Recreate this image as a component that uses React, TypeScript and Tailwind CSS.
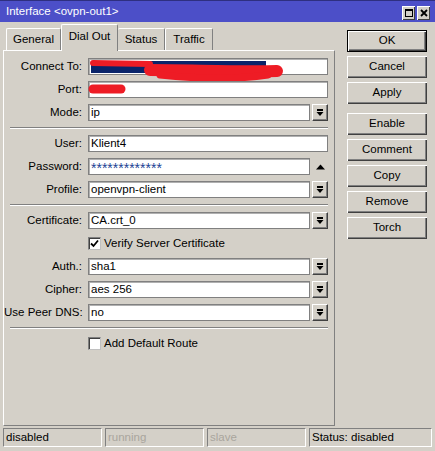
import React from 'react';

const font = { fontFamily: '"Liberation Sans", Arial, sans-serif' };

const DropArrow: React.FC = () => (
  <div className="w-[16px] h-[17px] ml-[2px] bg-[#d4d0c8] border-t border-l border-t-white border-l-white border-r border-b border-r-[#404040] border-b-[#404040] shadow-[inset_-1px_-1px_0_#808080] flex items-center justify-center">
    <svg width="8" height="8" viewBox="0 0 8 8">
      <rect x="1" y="0" width="6" height="2" fill="#000" />
      <polygon points="0.5,3 7.5,3 4,7" fill="#000" />
    </svg>
  </div>
);

const Field: React.FC<{ value?: React.ReactNode; drop?: boolean; up?: boolean }> = ({ value, drop, up }) => (
  <div className="flex items-center">
    <div
      className={`h-[17px] ${drop || up ? 'w-[222px]' : 'w-[240px]'} bg-white border border-[#808080] shadow-[inset_1px_1px_0_#b0b0b0] flex items-center pl-[2px] text-[11.5px] text-black overflow-hidden whitespace-nowrap`}
    >
      {value}
    </div>
    {drop && <DropArrow />}
    {up && (
      <div className="w-[16px] h-[17px] ml-[2px] flex items-center justify-center">
        <svg width="9" height="6" viewBox="0 0 9 6">
          <polygon points="0,5.5 9,5.5 4.5,0.5" fill="#000" />
        </svg>
      </div>
    )}
  </div>
);

const Row: React.FC<{ label?: string; children: React.ReactNode }> = ({ label, children }) => (
  <div className="flex items-center h-[23px]">
    <div className="w-[78px] text-right text-[11.5px] text-black whitespace-nowrap">{label}</div>
    <div className="ml-[6px] relative">{children}</div>
  </div>
);

const Separator: React.FC = () => (
  <div className="h-[8px] flex items-center pl-[6px] pr-[6px]">
    <div className="w-full border-t border-t-[#808080] border-b border-b-white" />
  </div>
);

const Check: React.FC<{ checked?: boolean; label: string }> = ({ checked, label }) => (
  <div className="flex items-center">
    <div className="w-[13px] h-[13px] bg-white border border-t-[#808080] border-l-[#808080] border-r-[#c0c0c0] border-b-[#c0c0c0] shadow-[inset_1px_1px_0_#404040] flex items-center justify-center">
      {checked && (
        <svg width="9" height="9" viewBox="0 0 9 9">
          <path d="M1 4.5 L3.5 7 L8 1.5" stroke="#000" strokeWidth="1.8" fill="none" />
        </svg>
      )}
    </div>
    <span className="ml-[3px] text-[11.5px] text-black">{label}</span>
  </div>
);

const Button: React.FC<{ label: string; primary?: boolean }> = ({ label, primary }) => (
  <div
    className={`h-[22px] w-[80px] flex items-center justify-center text-[11.5px] text-black bg-[#d4d0c8] shadow-[inset_1px_1px_0_#fff,inset_-1px_-1px_0_#404040,inset_-2px_-2px_0_#808080] ${
      primary ? 'border border-black' : ''
    }`}
  >
    {label}
  </div>
);

const TitleButton: React.FC<{ children: React.ReactNode }> = ({ children }) => (
  <div className="w-[13px] h-[14px] bg-[#d4d0c8] shadow-[inset_1px_1px_0_#fff,inset_-1px_-1px_0_#404040] flex items-center justify-center">
    {children}
  </div>
);

const StatusCell: React.FC<{ text: string; dim?: boolean; wide?: boolean }> = ({ text, dim, wide }) => (
  <div
    className={`h-[19px] ${wide ? 'w-[123px]' : 'w-[99px]'} border border-t-[#808080] border-l-[#808080] border-r-white border-b-white flex items-center pl-[2px] text-[11.5px] ${
      dim ? 'text-[#a9a59d]' : 'text-black'
    }`}
  >
    {text}
  </div>
);

export default function App() {
  return (
    <div className="w-[435px] h-[451px] bg-[#d4d0c8] flex flex-col overflow-hidden" style={font}>
      {/* title bar */}
      <div className="h-[22px] bg-[#4c4fc8] border-t border-t-[#2e2f80] flex items-center pl-[6px] pr-[5px]">
        <span className="text-white text-[11.5px] flex-1">Interface &lt;ovpn-out1&gt;</span>
        <div className="flex gap-[2px] mt-[3px]">
          <TitleButton>
            <div className="w-[8px] h-[8px] border border-black border-t-2" />
          </TitleButton>
          <TitleButton>
            <svg width="8" height="8" viewBox="0 0 8 8">
              <path d="M1 1 L7 7 M7 1 L1 7" stroke="#000" strokeWidth="1.8" />
            </svg>
          </TitleButton>
        </div>
      </div>

      <div className="flex pl-[3px]">
        <div className="w-[332px] flex flex-col">
          {/* tabs */}
          <div className="h-[28px] flex items-end pl-[3px]">
            <div className="w-[55px] h-[22px] border-t border-l border-t-white border-l-white border-r border-r-[#808080] rounded-t-[2px] flex items-center justify-center text-[11.5px] text-black">
              General
            </div>
            <div className="relative z-10 -mb-[1px] w-[57px] h-[27px] bg-[#d4d0c8] border-t border-l border-t-white border-l-white border-r border-r-[#808080] rounded-t-[2px] flex items-center justify-center pb-[3px] text-[11.5px] text-black">
              Dial Out
            </div>
            <div className="w-[47px] h-[22px] border-t border-t-white border-r border-r-[#808080] rounded-t-[2px] flex items-center justify-center text-[11.5px] text-black">
              Status
            </div>
            <div className="w-[48px] h-[22px] border-t border-l border-t-white border-l-white border-r border-r-[#808080] rounded-t-[2px] flex items-center justify-center text-[11.5px] text-black">
              Traffic
            </div>
          </div>

          {/* panel */}
          <div className="h-[376px] border border-t-white border-l-white border-r-[#808080] border-b-[#808080] pt-[4px]">
            <Row label="Connect To:">
              <Field value={<span className="block w-[175px] h-[12px] bg-[#0a246a]" />} />
              {/* scribble over the address */}
              <svg className="absolute left-0 top-0" width="200" height="26" viewBox="88 58 200 26">
                <path d="M93 63 L150 64" stroke="#ee1c25" strokeWidth="6" fill="none" strokeLinecap="round" />
                <path d="M150 70 C190 70 240 72 277 71" stroke="#ee1c25" strokeWidth="12" fill="none" strokeLinecap="round" />
                <path d="M160 75 C200 79 240 79 268 75" stroke="#ee1c25" strokeWidth="7" fill="none" strokeLinecap="round" />
              </svg>
            </Row>
            <Row label="Port:">
              <Field />
              <svg className="absolute left-0 top-0" width="40" height="17" viewBox="88 82 40 17">
                <path d="M93 90 L121 90" stroke="#ee1c25" strokeWidth="9" fill="none" strokeLinecap="round" />
              </svg>
            </Row>
            <Row label="Mode:">
              <Field value="ip" drop />
            </Row>
            <Separator />
            <Row label="User:">
              <Field value="Klient4" />
            </Row>
            <Row label="Password:">
              <Field
                value={<span className="text-[#1c3f94] text-[14px] leading-none mt-[3px]">*************</span>}
                up
              />
            </Row>
            <Row label="Profile:">
              <Field value="openvpn-client" drop />
            </Row>
            <Separator />
            <Row label="Certificate:">
              <Field value="CA.crt_0" drop />
            </Row>
            <Row>
              <Check checked label="Verify Server Certificate" />
            </Row>
            <Row label="Auth.:">
              <Field value="sha1" drop />
            </Row>
            <Row label="Cipher:">
              <Field value="aes 256" drop />
            </Row>
            <Row label="Use Peer DNS:">
              <Field value="no" drop />
            </Row>
            <Separator />
            <Row>
              <Check label="Add Default Route" />
            </Row>
          </div>
        </div>

        {/* action buttons */}
        <div className="ml-[12px] pt-[8px] flex flex-col">
          <div className="flex flex-col gap-[4px]">
            <Button label="OK" primary />
            <Button label="Cancel" />
            <Button label="Apply" />
          </div>
          <div className="flex flex-col gap-[4px] mt-[9px]">
            <Button label="Enable" />
            <Button label="Comment" />
            <Button label="Copy" />
            <Button label="Remove" />
            <Button label="Torch" />
          </div>
        </div>
      </div>

      {/* status bar */}
      <div className="mt-[2px] pl-[3px] flex gap-[3px]">
        <StatusCell text="disabled" />
        <StatusCell text="running" dim />
        <StatusCell text="slave" dim />
        <StatusCell text="Status: disabled" wide />
      </div>
    </div>
  );
}
